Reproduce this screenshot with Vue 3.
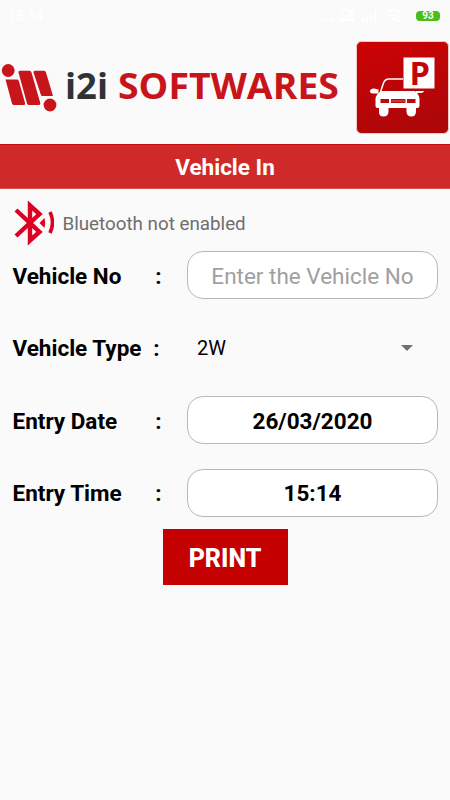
<template>
  <div class="screen">
    <div class="status-bar">
      <span class="clock">15:14</span>
      <div class="status-icons">
        <svg width="90" height="16" viewBox="0 0 90 16">
          <g fill="#fff">
            <circle cx="-1" cy="12" r="1.500" />
            <circle cx="4" cy="12" r="1.500" />
            <circle cx="9" cy="12" r="1.500" />
            <path d="M39 14h2v-3h-2zM43 14h2v-5h-2zM47 14h2V6h-2zM51 14h2V3h-2zM75 14h2v-3h-2zM78 14h2v-3h-2z" />
          </g>
          <g fill="none" stroke="#fff" stroke-width="1.800">
            <path d="M18 12h13l-2-3V6q-1-4-5-4t-5 4v3zM19 14L30 1" />
            <path d="M62 5q9-6 17 0M65 8.500q6-4 11 0M68 11.500q3-2 5 0" />
          </g>
        </svg>
        <span class="battery">93</span>
      </div>
    </div>

    <header class="header">
      <svg class="brand" width="345" height="70" viewBox="0 0 345 70">
        <g fill="#c8141b">
          <circle cx="8.200" cy="20.500" r="6.400" />
          <circle cx="50" cy="55" r="6.400" />
          <path d="M5.500 29.500H17Q18.500 29.500 19 31.500L25 53Q25.500 55 24 55H14Q12.500 55 12 53.500Z" />
          <path d="M18.500 22.500Q18 20.800 20 20.800H29.500Q31 20.800 31.500 22.500L40.300 53Q40.500 55 39 55H29Q27.500 55 27 53.500Z" />
          <path d="M33.500 22.500Q33 20.800 35 20.800H44Q45.500 20.800 46 22.500L53 46H42.500Q41.200 46 40.800 44.500Z" />
        </g>
        <text class="brand-text dark" x="65" y="49" textLength="43" lengthAdjust="spacingAndGlyphs">i2i</text>
        <text class="brand-text" x="118" y="49" textLength="221" lengthAdjust="spacingAndGlyphs">SOFTWARES</text>
      </svg>
      <svg class="parking" width="93" height="93" viewBox="0 0 93 93">
        <defs>
          <linearGradient id="tile" x1="0" y1="0" x2="0.3" y2="1">
            <stop offset="0" stop-color="#cd0204" />
            <stop offset="1" stop-color="#ae0709" />
          </linearGradient>
        </defs>
        <rect x="0.500" y="0.500" width="92" height="92" rx="5" fill="url(#tile)" stroke="#eec9c5" />
        <path d="M24.500 51L27.500 42Q29 38 33 38H47" fill="none" stroke="#fff" stroke-width="1.500" />
        <g fill="#fff">
          <path d="M25 50H59Q63 53 63.500 58V65Q63.500 67 61.500 67H60V71Q59.500 75.500 55.500 75.500Q51 75.500 50.500 71V67H32.500V71Q32 75.500 27.500 75.500Q23 75.500 23 71V67H21.500Q19.500 67 19.500 65V58Q20 53 25 50Z" />
          <path d="M14 50Q14.500 47 18 47.500L22.500 48.500V52.500H17Q14 52.500 14 50ZM60 50H68.500L66 52H60Z" />
          <rect x="47.500" y="16.500" width="31" height="31" />
        </g>
        <path d="M24.500 58H33V62H24.500ZM35 58H49.500V62H35ZM51 58H59.500V62H51Z" fill="#c00709" />
        <path d="M35 60H49" stroke="#e88" stroke-width="0.700" />
        <text class="p-letter" x="53.500" y="43.500" textLength="20.500" lengthAdjust="spacingAndGlyphs">P</text>
      </svg>
    </header>

    <div class="title-bar">Vehicle In</div>

    <div class="bluetooth">
      <svg width="40" height="46" viewBox="0 0 40 46">
        <g fill="none" stroke="#dc0023">
          <path d="M2 10L25.500 32L16 40.500V5.500L25.500 14L2 36" stroke-width="4.400" />
          <path d="M36 12Q41 22.500 36 33" stroke-width="3.600" />
        </g>
        <path d="M25.500 23L30.500 18Q32 23 30.500 28Z" fill="#dc0023" />
      </svg>
      <span>Bluetooth not enabled</span>
    </div>

    <div class="form">
      <div v-for="row in rows" :key="row.label" class="form-row">
        <div class="label" :class="row.type">
          <span>{{ row.label }}</span>
          <span>:</span>
        </div>
        <div v-if="row.type === 'select'" class="spinner">
          <span>{{ row.value }}</span>
          <svg width="14" height="8" viewBox="0 0 14 8">
            <path d="M1 1H13L7 7Z" fill="#707070" />
          </svg>
        </div>
        <input
          v-else
          v-model="row.value"
          class="field"
          :placeholder="row.placeholder"
          :readonly="row.type === 'readonly'"
        />
      </div>
    </div>

    <button class="print">PRINT</button>
  </div>
</template>

<script setup>
import { ref } from 'vue'

const rows = ref([
  { label: 'Vehicle No', type: 'input', value: '', placeholder: 'Enter the Vehicle No' },
  { label: 'Vehicle Type', type: 'select', value: '2W' },
  { label: 'Entry Date', type: 'readonly', value: '26/03/2020' },
  { label: 'Entry Time', type: 'readonly', value: '15:14' }
])
</script>

<style>
body {
  margin: 0;
  background: #fafafa;
}
</style>

<style scoped>
.screen {
  width: 450px;
  height: 800px;
  overflow: hidden;
  background: #fafafa;
  font-family: Roboto, "Liberation Sans", sans-serif;
}
.status-bar {
  display: flex;
  justify-content: space-between;
  height: 31px;
  padding: 0 10px 0 8px;
  box-sizing: border-box;
}
.clock {
  color: #fff;
  font-size: 14px;
  font-weight: 500;
  line-height: 33px;
}
.status-icons {
  display: flex;
  align-items: center;
  gap: 3px;
}
.status-icons svg {
  overflow: visible;
}
.battery {
  width: 24px;
  height: 10px;
  border-radius: 4px;
  background: #48bf18;
  color: #fff;
  font-size: 10px;
  font-weight: 700;
  line-height: 10px;
  text-align: center;
}
.header {
  display: flex;
  align-items: flex-start;
  justify-content: space-between;
  height: 113px;
  padding: 10px 1px 0 0;
  box-sizing: border-box;
}
.brand {
  margin-top: 9px;
}
.brand-text {
  fill: #c8141b;
  font-family: "Open Sans", sans-serif;
  font-size: 35px;
  font-weight: 700;
}
.brand-text.dark {
  fill: #303336;
}
.p-letter {
  fill: #c40608;
  font-family: "Open Sans", sans-serif;
  font-size: 32px;
  font-weight: 700;
}
.title-bar {
  height: 45px;
  background: #cf2a29;
  border-top: 1px solid #c40a0a;
  border-bottom: 1px solid #d9504e;
  box-sizing: border-box;
  color: #fff;
  font-size: 22.500px;
  font-weight: 700;
  line-height: 44px;
  text-align: center;
}
.bluetooth {
  display: flex;
  align-items: center;
  gap: 8.500px;
  height: 46px;
  padding: 11px 0 0 14px;
  color: #6e6e6e;
  font-size: 18.800px;
}
.bluetooth span {
  padding-top: 2px;
}
.form {
  display: grid;
  grid-auto-rows: 48px;
  row-gap: 24.600px;
  padding: 5px 12px 0 12.500px;
}
.form-row {
  display: flex;
  justify-content: space-between;
  align-items: center;
}
.label {
  display: flex;
  justify-content: space-between;
  width: 149px;
  padding-top: 1px;
  color: #000;
  font-size: 22.500px;
  font-weight: 700;
}
.label.select {
  width: 147px;
}
.field {
  width: 251px;
  height: 48px;
  padding: 1px 0 0;
  border: 1px solid #b8b8b8;
  border-radius: 16px;
  box-sizing: border-box;
  background: #fff;
  color: #000;
  font-family: inherit;
  font-size: 22.500px;
  font-weight: 700;
  text-align: center;
  outline: none;
}
.field::placeholder {
  color: #a0a0a0;
  font-weight: 400;
  opacity: 1;
}
.spinner {
  display: flex;
  justify-content: space-between;
  align-items: center;
  width: 251px;
  padding: 0 24px 0 10px;
  box-sizing: border-box;
  color: #000;
  font-size: 20px;
}
.print {
  display: block;
  width: 125px;
  height: 56px;
  margin: 12px 0 0 162.500px;
  padding: 3px 0 0;
  border: 0;
  background: #c40000;
  color: #fff;
  font-family: inherit;
  font-size: 25px;
  font-weight: 800;
}
</style>
